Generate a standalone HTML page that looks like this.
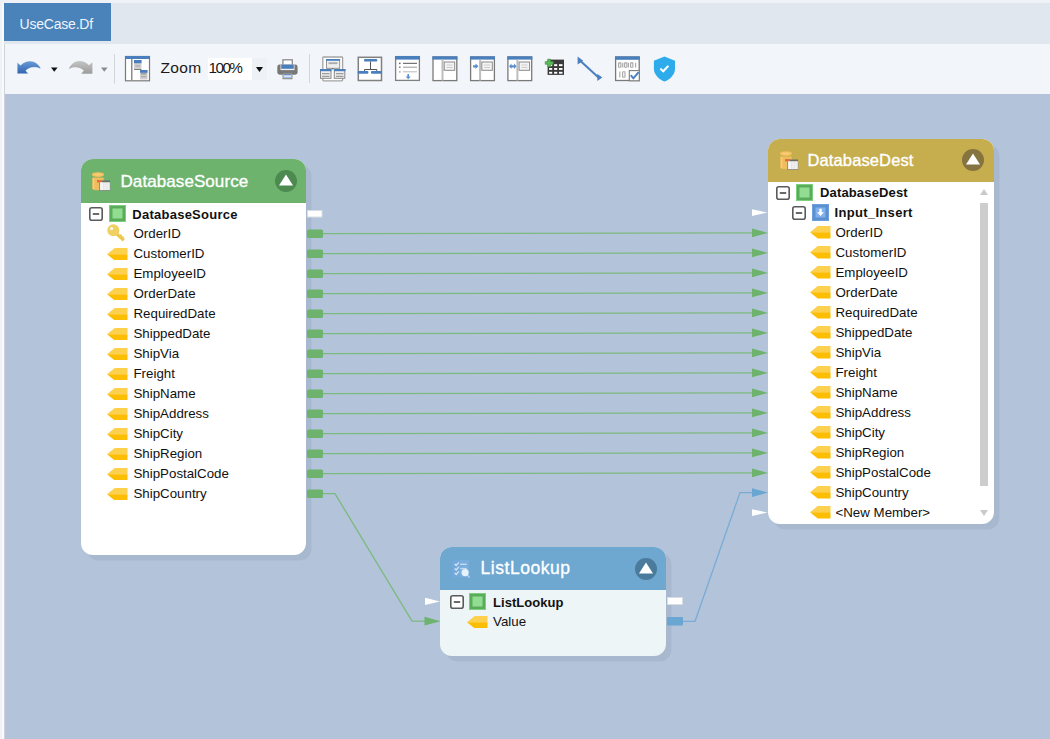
<!DOCTYPE html>
<html><head><meta charset="utf-8"><style>
*{margin:0;padding:0;box-sizing:border-box}
html,body{width:1050px;height:739px;overflow:hidden;background:#eff3f7;font-family:"Liberation Sans", sans-serif;position:relative}
.a{position:absolute}
.t{position:absolute;white-space:pre;line-height:1}
</style></head><body>
<div class="a" style="left:4px;top:3px;width:1046px;height:41px;background:#e0e7ef"></div>
<div class="a" style="left:4px;top:3px;width:107px;height:38px;background:#4a82ba"></div>
<div class="a" style="left:4px;top:44px;width:1046px;height:50px;background:#f2f5f9;border-left:1px solid #cfd4d9"></div>
<div class="a" style="left:5px;top:94px;width:1045px;height:645px;background:#b3c4da"></div>
<div class="a" style="left:4px;top:94px;width:1px;height:645px;background:#cdd2d8"></div>
<div class="a" style="left:2px;top:3px;width:1.5px;height:736px;background:#f8fafc"></div>

<div class="a" style="left:80.6px;top:159.3px;width:225.7px;height:395.5px;border-radius:12px;background:#ffffff;box-shadow:5.5px 5.5px 0 #a8b9cf;overflow:hidden"><div class="a" style="left:0;top:0;width:225.7px;height:43.7px;background:#6db36e"></div></div>
<div class="t" style="left:120.5px;top:173.1px;font-size:17px;letter-spacing:0.08px;color:#fff;-webkit-text-stroke:0.35px #fff">DatabaseSource</div>
<svg class="a" style="left:91px;top:171px" width="21" height="21" viewBox="0 0 21 21">
<path d="M1.2 6.4 H12.7 V17.2 Q12.7 19.2 6.95 19.2 Q1.2 19.2 1.2 17.2 Z" fill="#f0bd5e"/>
<rect x="2" y="7" width="1.3" height="11" fill="#f7cf7a"/>
<ellipse cx="6.95" cy="3.55" rx="5.5" ry="1.8" fill="#f6cd74" stroke="#f2bc58" stroke-width="1.2"/>
<rect x="6" y="9.1" width="5" height="2.3" fill="#e5693a"/>
<rect x="11" y="9.5" width="8" height="1.9" fill="#6a6a6a"/>
<rect x="8.8" y="11.4" width="10.2" height="8" fill="#e4e4e4"/>
<rect x="9.3" y="11.6" width="2.8" height="7.4" fill="#f4f4f4"/><rect x="12.8" y="11.6" width="2.6" height="7.4" fill="#ececec"/><rect x="16" y="11.6" width="2.6" height="7.4" fill="#eeeeee"/>
<rect x="8.3" y="11.4" width="0.7" height="8.3" fill="#777"/><rect x="8.3" y="19.2" width="11" height="0.6" fill="#777"/><rect x="18.8" y="11.4" width="0.6" height="8.3" fill="#999"/>
</svg>
<svg class="a" style="left:275.4px;top:170.2px" width="22" height="22" viewBox="0 0 22 22"><circle cx="11" cy="11" r="11" fill="#4d8a4f"/><path d="M11 4.5 L18 15.5 L4 15.5 Z" fill="#fff"/></svg>
<div class="a" style="left:768.3px;top:138.5px;width:226.2px;height:385px;border-radius:12px;background:#ffffff;box-shadow:5.5px 5.5px 0 #a8b9cf;overflow:hidden"><div class="a" style="left:0;top:0;width:226.2px;height:43px;background:#c6ae4e"></div></div>
<div class="t" style="left:807.5px;top:152.0px;font-size:16.5px;letter-spacing:0.12px;color:#fff;-webkit-text-stroke:0.35px #fff">DatabaseDest</div>
<svg class="a" style="left:778.5px;top:150px" width="21" height="21" viewBox="0 0 21 21">
<path d="M1.2 6.4 H12.7 V17.2 Q12.7 19.2 6.95 19.2 Q1.2 19.2 1.2 17.2 Z" fill="#f0bd5e"/>
<rect x="2" y="7" width="1.3" height="11" fill="#f7cf7a"/>
<ellipse cx="6.95" cy="3.55" rx="5.5" ry="1.8" fill="#f6cd74" stroke="#f2bc58" stroke-width="1.2"/>
<rect x="6" y="9.1" width="5" height="2.3" fill="#e5693a"/>
<rect x="11" y="9.5" width="8" height="1.9" fill="#6a6a6a"/>
<rect x="8.8" y="11.4" width="10.2" height="8" fill="#e4e4e4"/>
<rect x="9.3" y="11.6" width="2.8" height="7.4" fill="#f4f4f4"/><rect x="12.8" y="11.6" width="2.6" height="7.4" fill="#ececec"/><rect x="16" y="11.6" width="2.6" height="7.4" fill="#eeeeee"/>
<rect x="8.3" y="11.4" width="0.7" height="8.3" fill="#777"/><rect x="8.3" y="19.2" width="11" height="0.6" fill="#777"/><rect x="18.8" y="11.4" width="0.6" height="8.3" fill="#999"/>
</svg>
<svg class="a" style="left:962.4px;top:149.3px" width="22" height="22" viewBox="0 0 22 22"><circle cx="11" cy="11" r="11" fill="#857440"/><path d="M11 4.5 L18 15.5 L4 15.5 Z" fill="#fff"/></svg>
<div class="a" style="left:440.3px;top:547.2px;width:226.2px;height:108.6px;border-radius:12px;background:#eef5f7;box-shadow:5.5px 5.5px 0 #a8b9cf;overflow:hidden"><div class="a" style="left:0;top:0;width:226.2px;height:42.9px;background:#6ea7d0"></div></div>
<div class="t" style="left:480.5px;top:560.2px;font-size:17.5px;letter-spacing:0.55px;color:#fff;-webkit-text-stroke:0.35px #fff">ListLookup</div>
<svg class="a" style="left:452px;top:560px" width="18" height="19" viewBox="0 0 18 19">
<rect x="0" y="0" width="17" height="17.4" fill="#78aedd"/>
<rect x="0" y="0" width="7.5" height="17.4" fill="#73a9da"/>
<path d="M2.6 4 L4.2 5.4 L6.8 2.4 M2.6 8.5 L4.2 9.9 L6.8 6.9 M2.6 13 L4.2 14.4 L6.8 11.4" stroke="#dce9f6" stroke-width="1.4" fill="none" stroke-opacity="0.9"/>
<rect x="8.3" y="3.6" width="6.4" height="1.4" fill="#c4dbf0"/><rect x="8.3" y="7.9" width="6.4" height="1.3" fill="#c4dbf0"/>
<path d="M15.2 14.8 L17.6 17.6" stroke="#b9d5ee" stroke-width="1.3"/>
<circle cx="13.1" cy="12.6" r="3.6" fill="#e6f2fc"/>
</svg>
<svg class="a" style="left:635.3px;top:557.8px" width="22" height="22" viewBox="0 0 22 22"><circle cx="11" cy="11" r="11" fill="#4b7b9c"/><path d="M11 4.5 L18 15.5 L4 15.5 Z" fill="#fff"/></svg>
<svg class="a" style="left:89px;top:207px" width="14" height="14" viewBox="0 0 14 14"><rect x="0.8" y="0.8" width="12.4" height="12.4" rx="2" fill="#fff" stroke="#5a5a5a" stroke-width="1.6"/><rect x="3.8" y="6.1" width="6.4" height="1.8" fill="#5a5a5a"/></svg>
<svg class="a" style="left:109px;top:205px" width="17" height="17" viewBox="0 0 17 17"><rect x="0" y="0" width="17" height="17" fill="#7ccf7c"/><rect x="1" y="1" width="15" height="15" fill="#5aab5a"/><rect x="3.5" y="3.5" width="10" height="10" fill="#92dd92"/></svg>
<div class="t" style="left:132.3px;top:207.5px;font-size:13px;font-weight:bold;letter-spacing:0.25px;color:#111">DatabaseSource</div>
<svg class="a" style="left:107px;top:224px" width="18" height="18" viewBox="0 0 18 18"><path d="M9.5 9.8 L16.8 16.2" stroke="#ecc850" stroke-width="3.2"/><path d="M13 12 l1.6 -1.2 M15 13.8 l1.6 -1.2" stroke="#ecc850" stroke-width="1.8"/><circle cx="6.3" cy="6.3" r="6" fill="#f0d060"/><circle cx="4.6" cy="4.4" r="1.5" fill="#fff"/></svg>
<div class="t" style="left:133.5px;top:227.0px;font-size:13.3px;font-weight:normal;letter-spacing:0px;color:#111">OrderID</div>
<svg class="a" style="left:107px;top:247.5px" width="20.5" height="12.4" viewBox="0 0 20.5 12.4"><path d="M0 6.2 L7.7 0 H20.5 V6.2 Z" fill="#fdd04e"/><path d="M0 6.2 H20.5 V12.4 H7.7 Z" fill="#fdbd00"/></svg>
<div class="t" style="left:133.5px;top:247.0px;font-size:13.3px;font-weight:normal;letter-spacing:0px;color:#111">CustomerID</div>
<svg class="a" style="left:107px;top:267.5px" width="20.5" height="12.4" viewBox="0 0 20.5 12.4"><path d="M0 6.2 L7.7 0 H20.5 V6.2 Z" fill="#fdd04e"/><path d="M0 6.2 H20.5 V12.4 H7.7 Z" fill="#fdbd00"/></svg>
<div class="t" style="left:133.5px;top:267.0px;font-size:13.3px;font-weight:normal;letter-spacing:0px;color:#111">EmployeeID</div>
<svg class="a" style="left:107px;top:287.5px" width="20.5" height="12.4" viewBox="0 0 20.5 12.4"><path d="M0 6.2 L7.7 0 H20.5 V6.2 Z" fill="#fdd04e"/><path d="M0 6.2 H20.5 V12.4 H7.7 Z" fill="#fdbd00"/></svg>
<div class="t" style="left:133.5px;top:287.0px;font-size:13.3px;font-weight:normal;letter-spacing:0px;color:#111">OrderDate</div>
<svg class="a" style="left:107px;top:307.5px" width="20.5" height="12.4" viewBox="0 0 20.5 12.4"><path d="M0 6.2 L7.7 0 H20.5 V6.2 Z" fill="#fdd04e"/><path d="M0 6.2 H20.5 V12.4 H7.7 Z" fill="#fdbd00"/></svg>
<div class="t" style="left:133.5px;top:307.0px;font-size:13.3px;font-weight:normal;letter-spacing:0px;color:#111">RequiredDate</div>
<svg class="a" style="left:107px;top:327.5px" width="20.5" height="12.4" viewBox="0 0 20.5 12.4"><path d="M0 6.2 L7.7 0 H20.5 V6.2 Z" fill="#fdd04e"/><path d="M0 6.2 H20.5 V12.4 H7.7 Z" fill="#fdbd00"/></svg>
<div class="t" style="left:133.5px;top:327.0px;font-size:13.3px;font-weight:normal;letter-spacing:0px;color:#111">ShippedDate</div>
<svg class="a" style="left:107px;top:347.5px" width="20.5" height="12.4" viewBox="0 0 20.5 12.4"><path d="M0 6.2 L7.7 0 H20.5 V6.2 Z" fill="#fdd04e"/><path d="M0 6.2 H20.5 V12.4 H7.7 Z" fill="#fdbd00"/></svg>
<div class="t" style="left:133.5px;top:347.0px;font-size:13.3px;font-weight:normal;letter-spacing:0px;color:#111">ShipVia</div>
<svg class="a" style="left:107px;top:367.5px" width="20.5" height="12.4" viewBox="0 0 20.5 12.4"><path d="M0 6.2 L7.7 0 H20.5 V6.2 Z" fill="#fdd04e"/><path d="M0 6.2 H20.5 V12.4 H7.7 Z" fill="#fdbd00"/></svg>
<div class="t" style="left:133.5px;top:367.0px;font-size:13.3px;font-weight:normal;letter-spacing:0px;color:#111">Freight</div>
<svg class="a" style="left:107px;top:387.5px" width="20.5" height="12.4" viewBox="0 0 20.5 12.4"><path d="M0 6.2 L7.7 0 H20.5 V6.2 Z" fill="#fdd04e"/><path d="M0 6.2 H20.5 V12.4 H7.7 Z" fill="#fdbd00"/></svg>
<div class="t" style="left:133.5px;top:387.0px;font-size:13.3px;font-weight:normal;letter-spacing:0px;color:#111">ShipName</div>
<svg class="a" style="left:107px;top:407.5px" width="20.5" height="12.4" viewBox="0 0 20.5 12.4"><path d="M0 6.2 L7.7 0 H20.5 V6.2 Z" fill="#fdd04e"/><path d="M0 6.2 H20.5 V12.4 H7.7 Z" fill="#fdbd00"/></svg>
<div class="t" style="left:133.5px;top:407.0px;font-size:13.3px;font-weight:normal;letter-spacing:0px;color:#111">ShipAddress</div>
<svg class="a" style="left:107px;top:427.5px" width="20.5" height="12.4" viewBox="0 0 20.5 12.4"><path d="M0 6.2 L7.7 0 H20.5 V6.2 Z" fill="#fdd04e"/><path d="M0 6.2 H20.5 V12.4 H7.7 Z" fill="#fdbd00"/></svg>
<div class="t" style="left:133.5px;top:427.0px;font-size:13.3px;font-weight:normal;letter-spacing:0px;color:#111">ShipCity</div>
<svg class="a" style="left:107px;top:447.5px" width="20.5" height="12.4" viewBox="0 0 20.5 12.4"><path d="M0 6.2 L7.7 0 H20.5 V6.2 Z" fill="#fdd04e"/><path d="M0 6.2 H20.5 V12.4 H7.7 Z" fill="#fdbd00"/></svg>
<div class="t" style="left:133.5px;top:447.0px;font-size:13.3px;font-weight:normal;letter-spacing:0px;color:#111">ShipRegion</div>
<svg class="a" style="left:107px;top:467.5px" width="20.5" height="12.4" viewBox="0 0 20.5 12.4"><path d="M0 6.2 L7.7 0 H20.5 V6.2 Z" fill="#fdd04e"/><path d="M0 6.2 H20.5 V12.4 H7.7 Z" fill="#fdbd00"/></svg>
<div class="t" style="left:133.5px;top:467.0px;font-size:13.3px;font-weight:normal;letter-spacing:0px;color:#111">ShipPostalCode</div>
<svg class="a" style="left:107px;top:487.5px" width="20.5" height="12.4" viewBox="0 0 20.5 12.4"><path d="M0 6.2 L7.7 0 H20.5 V6.2 Z" fill="#fdd04e"/><path d="M0 6.2 H20.5 V12.4 H7.7 Z" fill="#fdbd00"/></svg>
<div class="t" style="left:133.5px;top:487.0px;font-size:13.3px;font-weight:normal;letter-spacing:0px;color:#111">ShipCountry</div>
<svg class="a" style="left:776px;top:186px" width="14" height="14" viewBox="0 0 14 14"><rect x="0.8" y="0.8" width="12.4" height="12.4" rx="2" fill="#fff" stroke="#5a5a5a" stroke-width="1.6"/><rect x="3.8" y="6.1" width="6.4" height="1.8" fill="#5a5a5a"/></svg>
<svg class="a" style="left:796px;top:184px" width="17" height="17" viewBox="0 0 17 17"><rect x="0" y="0" width="17" height="17" fill="#7ccf7c"/><rect x="1" y="1" width="15" height="15" fill="#5aab5a"/><rect x="3.5" y="3.5" width="10" height="10" fill="#92dd92"/></svg>
<div class="t" style="left:820px;top:186.4px;font-size:13px;font-weight:bold;letter-spacing:0.15px;color:#111">DatabaseDest</div>
<svg class="a" style="left:791.5px;top:206px" width="14" height="14" viewBox="0 0 14 14"><rect x="0.8" y="0.8" width="12.4" height="12.4" rx="2" fill="#fff" stroke="#5a5a5a" stroke-width="1.6"/><rect x="3.8" y="6.1" width="6.4" height="1.8" fill="#5a5a5a"/></svg>
<svg class="a" style="left:811.5px;top:204px" width="17" height="17" viewBox="0 0 17 17"><rect x="0" y="0" width="17" height="17" fill="#6b9fde"/><rect x="1" y="1" width="15" height="15" fill="#5b91d0"/><rect x="3.5" y="3.5" width="10" height="10" fill="#80b1ec"/><path d="M7.3 4.8h2.4v3.4h2.3L8.5 12 5 8.2h2.3z" fill="#fff"/></svg>
<div class="t" style="left:834.5px;top:206.4px;font-size:13px;font-weight:bold;letter-spacing:0.32px;color:#111">Input_Insert</div>
<svg class="a" style="left:810px;top:226.4px" width="20.5" height="12.4" viewBox="0 0 20.5 12.4"><path d="M0 6.2 L7.7 0 H20.5 V6.2 Z" fill="#fdd04e"/><path d="M0 6.2 H20.5 V12.4 H7.7 Z" fill="#fdbd00"/></svg>
<div class="t" style="left:835.5px;top:225.9px;font-size:13.3px;font-weight:normal;letter-spacing:0px;color:#111">OrderID</div>
<svg class="a" style="left:810px;top:246.4px" width="20.5" height="12.4" viewBox="0 0 20.5 12.4"><path d="M0 6.2 L7.7 0 H20.5 V6.2 Z" fill="#fdd04e"/><path d="M0 6.2 H20.5 V12.4 H7.7 Z" fill="#fdbd00"/></svg>
<div class="t" style="left:835.5px;top:245.9px;font-size:13.3px;font-weight:normal;letter-spacing:0px;color:#111">CustomerID</div>
<svg class="a" style="left:810px;top:266.4px" width="20.5" height="12.4" viewBox="0 0 20.5 12.4"><path d="M0 6.2 L7.7 0 H20.5 V6.2 Z" fill="#fdd04e"/><path d="M0 6.2 H20.5 V12.4 H7.7 Z" fill="#fdbd00"/></svg>
<div class="t" style="left:835.5px;top:265.9px;font-size:13.3px;font-weight:normal;letter-spacing:0px;color:#111">EmployeeID</div>
<svg class="a" style="left:810px;top:286.4px" width="20.5" height="12.4" viewBox="0 0 20.5 12.4"><path d="M0 6.2 L7.7 0 H20.5 V6.2 Z" fill="#fdd04e"/><path d="M0 6.2 H20.5 V12.4 H7.7 Z" fill="#fdbd00"/></svg>
<div class="t" style="left:835.5px;top:285.9px;font-size:13.3px;font-weight:normal;letter-spacing:0px;color:#111">OrderDate</div>
<svg class="a" style="left:810px;top:306.4px" width="20.5" height="12.4" viewBox="0 0 20.5 12.4"><path d="M0 6.2 L7.7 0 H20.5 V6.2 Z" fill="#fdd04e"/><path d="M0 6.2 H20.5 V12.4 H7.7 Z" fill="#fdbd00"/></svg>
<div class="t" style="left:835.5px;top:305.9px;font-size:13.3px;font-weight:normal;letter-spacing:0px;color:#111">RequiredDate</div>
<svg class="a" style="left:810px;top:326.4px" width="20.5" height="12.4" viewBox="0 0 20.5 12.4"><path d="M0 6.2 L7.7 0 H20.5 V6.2 Z" fill="#fdd04e"/><path d="M0 6.2 H20.5 V12.4 H7.7 Z" fill="#fdbd00"/></svg>
<div class="t" style="left:835.5px;top:325.9px;font-size:13.3px;font-weight:normal;letter-spacing:0px;color:#111">ShippedDate</div>
<svg class="a" style="left:810px;top:346.4px" width="20.5" height="12.4" viewBox="0 0 20.5 12.4"><path d="M0 6.2 L7.7 0 H20.5 V6.2 Z" fill="#fdd04e"/><path d="M0 6.2 H20.5 V12.4 H7.7 Z" fill="#fdbd00"/></svg>
<div class="t" style="left:835.5px;top:345.9px;font-size:13.3px;font-weight:normal;letter-spacing:0px;color:#111">ShipVia</div>
<svg class="a" style="left:810px;top:366.4px" width="20.5" height="12.4" viewBox="0 0 20.5 12.4"><path d="M0 6.2 L7.7 0 H20.5 V6.2 Z" fill="#fdd04e"/><path d="M0 6.2 H20.5 V12.4 H7.7 Z" fill="#fdbd00"/></svg>
<div class="t" style="left:835.5px;top:365.9px;font-size:13.3px;font-weight:normal;letter-spacing:0px;color:#111">Freight</div>
<svg class="a" style="left:810px;top:386.4px" width="20.5" height="12.4" viewBox="0 0 20.5 12.4"><path d="M0 6.2 L7.7 0 H20.5 V6.2 Z" fill="#fdd04e"/><path d="M0 6.2 H20.5 V12.4 H7.7 Z" fill="#fdbd00"/></svg>
<div class="t" style="left:835.5px;top:385.9px;font-size:13.3px;font-weight:normal;letter-spacing:0px;color:#111">ShipName</div>
<svg class="a" style="left:810px;top:406.4px" width="20.5" height="12.4" viewBox="0 0 20.5 12.4"><path d="M0 6.2 L7.7 0 H20.5 V6.2 Z" fill="#fdd04e"/><path d="M0 6.2 H20.5 V12.4 H7.7 Z" fill="#fdbd00"/></svg>
<div class="t" style="left:835.5px;top:405.9px;font-size:13.3px;font-weight:normal;letter-spacing:0px;color:#111">ShipAddress</div>
<svg class="a" style="left:810px;top:426.4px" width="20.5" height="12.4" viewBox="0 0 20.5 12.4"><path d="M0 6.2 L7.7 0 H20.5 V6.2 Z" fill="#fdd04e"/><path d="M0 6.2 H20.5 V12.4 H7.7 Z" fill="#fdbd00"/></svg>
<div class="t" style="left:835.5px;top:425.9px;font-size:13.3px;font-weight:normal;letter-spacing:0px;color:#111">ShipCity</div>
<svg class="a" style="left:810px;top:446.4px" width="20.5" height="12.4" viewBox="0 0 20.5 12.4"><path d="M0 6.2 L7.7 0 H20.5 V6.2 Z" fill="#fdd04e"/><path d="M0 6.2 H20.5 V12.4 H7.7 Z" fill="#fdbd00"/></svg>
<div class="t" style="left:835.5px;top:445.9px;font-size:13.3px;font-weight:normal;letter-spacing:0px;color:#111">ShipRegion</div>
<svg class="a" style="left:810px;top:466.4px" width="20.5" height="12.4" viewBox="0 0 20.5 12.4"><path d="M0 6.2 L7.7 0 H20.5 V6.2 Z" fill="#fdd04e"/><path d="M0 6.2 H20.5 V12.4 H7.7 Z" fill="#fdbd00"/></svg>
<div class="t" style="left:835.5px;top:465.9px;font-size:13.3px;font-weight:normal;letter-spacing:0px;color:#111">ShipPostalCode</div>
<svg class="a" style="left:810px;top:486.4px" width="20.5" height="12.4" viewBox="0 0 20.5 12.4"><path d="M0 6.2 L7.7 0 H20.5 V6.2 Z" fill="#fdd04e"/><path d="M0 6.2 H20.5 V12.4 H7.7 Z" fill="#fdbd00"/></svg>
<div class="t" style="left:835.5px;top:485.9px;font-size:13.3px;font-weight:normal;letter-spacing:0px;color:#111">ShipCountry</div>
<svg class="a" style="left:810px;top:506.4px" width="20.5" height="12.4" viewBox="0 0 20.5 12.4"><path d="M0 6.2 L7.7 0 H20.5 V6.2 Z" fill="#fdd04e"/><path d="M0 6.2 H20.5 V12.4 H7.7 Z" fill="#fdbd00"/></svg>
<div class="t" style="left:835.5px;top:505.9px;font-size:13.3px;font-weight:normal;letter-spacing:0px;color:#111">&lt;New Member&gt;</div>
<svg class="a" style="left:979px;top:188px" width="10" height="8"><path d="M1 7 L5 1 L9 7 Z" fill="#cacaca"/></svg>
<div class="a" style="left:980px;top:203px;width:7.5px;height:283px;background:#cdcdcd"></div>
<svg class="a" style="left:979px;top:509px" width="10" height="8"><path d="M1 1 L5 7 L9 1 Z" fill="#cacaca"/></svg>
<svg class="a" style="left:449.5px;top:595px" width="14" height="14" viewBox="0 0 14 14"><rect x="0.8" y="0.8" width="12.4" height="12.4" rx="2" fill="#fff" stroke="#5a5a5a" stroke-width="1.6"/><rect x="3.8" y="6.1" width="6.4" height="1.8" fill="#5a5a5a"/></svg>
<svg class="a" style="left:469px;top:593px" width="17" height="17" viewBox="0 0 17 17"><rect x="0" y="0" width="17" height="17" fill="#7ccf7c"/><rect x="1" y="1" width="15" height="15" fill="#5aab5a"/><rect x="3.5" y="3.5" width="10" height="10" fill="#92dd92"/></svg>
<div class="t" style="left:493px;top:595.5px;font-size:13px;font-weight:bold;letter-spacing:0.05px;color:#111">ListLookup</div>
<svg class="a" style="left:467px;top:615.5px" width="20.5" height="12.4" viewBox="0 0 20.5 12.4"><path d="M0 6.2 L7.7 0 H20.5 V6.2 Z" fill="#fdd04e"/><path d="M0 6.2 H20.5 V12.4 H7.7 Z" fill="#fdbd00"/></svg>
<div class="t" style="left:493px;top:615.0px;font-size:13.3px;font-weight:normal;letter-spacing:0px;color:#111">Value</div>
<svg class="a" style="left:0;top:0" width="1050" height="739" viewBox="0 0 1050 739">
<rect x="307.5" y="210.5" width="14.5" height="6.5" fill="#fff" stroke="#d8dde3" stroke-width="1"/>
<rect x="307" y="229.4" width="16" height="8.6" rx="1.5" fill="#6db36e"/>
<rect x="307" y="249.4" width="16" height="8.6" rx="1.5" fill="#6db36e"/>
<rect x="307" y="269.4" width="16" height="8.6" rx="1.5" fill="#6db36e"/>
<rect x="307" y="289.4" width="16" height="8.6" rx="1.5" fill="#6db36e"/>
<rect x="307" y="309.4" width="16" height="8.6" rx="1.5" fill="#6db36e"/>
<rect x="307" y="329.4" width="16" height="8.6" rx="1.5" fill="#6db36e"/>
<rect x="307" y="349.4" width="16" height="8.6" rx="1.5" fill="#6db36e"/>
<rect x="307" y="369.4" width="16" height="8.6" rx="1.5" fill="#6db36e"/>
<rect x="307" y="389.4" width="16" height="8.6" rx="1.5" fill="#6db36e"/>
<rect x="307" y="409.4" width="16" height="8.6" rx="1.5" fill="#6db36e"/>
<rect x="307" y="429.4" width="16" height="8.6" rx="1.5" fill="#6db36e"/>
<rect x="307" y="449.4" width="16" height="8.6" rx="1.5" fill="#6db36e"/>
<rect x="307" y="469.4" width="16" height="8.6" rx="1.5" fill="#6db36e"/>
<rect x="307" y="489.4" width="16" height="8.6" rx="1.5" fill="#6db36e"/>
<line x1="323" y1="233.6" x2="753" y2="232.9" stroke="#7cb97f" stroke-width="1.3"/>
<path d="M752 228.6 L768 232.9 L752 237.2 Z" fill="#6db36e"/>
<line x1="323" y1="253.6" x2="753" y2="252.9" stroke="#7cb97f" stroke-width="1.3"/>
<path d="M752 248.6 L768 252.9 L752 257.2 Z" fill="#6db36e"/>
<line x1="323" y1="273.6" x2="753" y2="272.9" stroke="#7cb97f" stroke-width="1.3"/>
<path d="M752 268.6 L768 272.9 L752 277.2 Z" fill="#6db36e"/>
<line x1="323" y1="293.6" x2="753" y2="292.9" stroke="#7cb97f" stroke-width="1.3"/>
<path d="M752 288.6 L768 292.9 L752 297.2 Z" fill="#6db36e"/>
<line x1="323" y1="313.6" x2="753" y2="312.9" stroke="#7cb97f" stroke-width="1.3"/>
<path d="M752 308.6 L768 312.9 L752 317.2 Z" fill="#6db36e"/>
<line x1="323" y1="333.6" x2="753" y2="332.9" stroke="#7cb97f" stroke-width="1.3"/>
<path d="M752 328.6 L768 332.9 L752 337.2 Z" fill="#6db36e"/>
<line x1="323" y1="353.6" x2="753" y2="352.9" stroke="#7cb97f" stroke-width="1.3"/>
<path d="M752 348.6 L768 352.9 L752 357.2 Z" fill="#6db36e"/>
<line x1="323" y1="373.6" x2="753" y2="372.9" stroke="#7cb97f" stroke-width="1.3"/>
<path d="M752 368.6 L768 372.9 L752 377.2 Z" fill="#6db36e"/>
<line x1="323" y1="393.6" x2="753" y2="392.9" stroke="#7cb97f" stroke-width="1.3"/>
<path d="M752 388.6 L768 392.9 L752 397.2 Z" fill="#6db36e"/>
<line x1="323" y1="413.6" x2="753" y2="412.9" stroke="#7cb97f" stroke-width="1.3"/>
<path d="M752 408.6 L768 412.9 L752 417.2 Z" fill="#6db36e"/>
<line x1="323" y1="433.6" x2="753" y2="432.9" stroke="#7cb97f" stroke-width="1.3"/>
<path d="M752 428.6 L768 432.9 L752 437.2 Z" fill="#6db36e"/>
<line x1="323" y1="453.6" x2="753" y2="452.9" stroke="#7cb97f" stroke-width="1.3"/>
<path d="M752 448.6 L768 452.9 L752 457.2 Z" fill="#6db36e"/>
<line x1="323" y1="473.6" x2="753" y2="472.9" stroke="#7cb97f" stroke-width="1.3"/>
<path d="M752 468.6 L768 472.9 L752 477.2 Z" fill="#6db36e"/>
<path d="M752 209.2 L767.5 212.6 L752 216.0 Z" fill="#fff"/>
<path d="M752 509.2 L767.5 512.6 L752 516.0 Z" fill="#fff"/>
<polyline points="323,493.7 335,493.7 412,621.2 426,621.2" fill="none" stroke="#7cb97f" stroke-width="1.3"/>
<path d="M424.5 616.8 L440.5 621.2 L424.5 625.6 Z" fill="#6db36e"/>
<path d="M425 597.8 L440 601.4 L425 605 Z" fill="#fff"/>
<rect x="667.5" y="597.5" width="15" height="7" fill="#fff" stroke="#d8dde3" stroke-width="1"/>
<rect x="667" y="617" width="16" height="8.4" rx="1" fill="#6aa6d2"/>
<polyline points="683,621.3 695,621.3 740,492.6 753,492.6" fill="none" stroke="#78acd6" stroke-width="1.3"/>
<path d="M752 488.3 L768 492.6 L752 496.9 Z" fill="#6aa6d2"/>
</svg>
<div class="t" style="left:19.5px;top:16.7px;font-size:14px;letter-spacing:-0.2px;color:#eef4fa">UseCase.Df</div>
<div class="a" style="left:207.5px;top:58px;width:59px;height:21.5px;background:#fff"></div>
<div class="a" style="left:252px;top:58px;width:14.5px;height:21.5px;background:#eef2f6"></div>
<div class="t" style="left:160.5px;top:60px;font-size:15.5px;letter-spacing:0.35px;color:#1a1a1a">Zoom</div>
<div class="t" style="left:208.5px;top:59.6px;font-size:15.3px;letter-spacing:-1.55px;color:#1a1a1a">100%</div>
<svg class="a" style="left:0;top:43px" width="1050" height="51" viewBox="0 43 1050 51">
<defs>
<linearGradient id="ug" x1="0" y1="0" x2="0" y2="1"><stop offset="0" stop-color="#6a9ad6"/><stop offset="1" stop-color="#2f64b0"/></linearGradient>
<linearGradient id="rg" x1="0" y1="0" x2="0" y2="1"><stop offset="0" stop-color="#c4c4c4"/><stop offset="1" stop-color="#9c9c9c"/></linearGradient>
</defs>
<!-- undo -->
<path d="M17.2 62.3 L17.2 73.8 L28.3 73.8 L25.8 70.6 C30.5 66.5 36 66.5 41 69 C38 61.5 28.5 57.5 20.6 65.2 Z" fill="url(#ug)" stroke="#fff" stroke-width="0.6" stroke-opacity="0.7"/>
<path d="M51 67.6 H57.6 L54.3 71.7 Z" fill="#111"/>
<!-- redo -->
<path d="M92.4 62.3 L92.4 73.8 L81.3 73.8 L83.8 70.6 C79.1 66.5 73.6 66.5 68.8 69 C71.6 61.5 81.1 57.5 89 65.2 Z" fill="url(#rg)"/>
<path d="M101 67.6 H107.6 L104.3 71.7 Z" fill="#8c8c8c"/>
<rect x="114" y="54" width="1" height="29.5" fill="#d2d6db"/>
<!-- layout icon -->
<rect x="125.5" y="56.5" width="24" height="24.3" fill="#fff" stroke="#7a7a7a" stroke-width="1.2"/>
<rect x="125" y="56" width="25" height="3" fill="#4a7fbe"/>
<rect x="131" y="59" width="1.5" height="21.5" fill="#8c8c8c"/>
<rect x="134" y="60" width="7.5" height="9.5" fill="#cfcfcf"/><rect x="134" y="60" width="7.5" height="3.2" fill="#4a7fbe"/><rect x="134" y="69" width="7.5" height="0.8" fill="#666"/><rect x="135.5" y="65.3" width="4.5" height="1.3" fill="#b0b0b0"/>
<rect x="140" y="70" width="7.5" height="9.5" fill="#cfcfcf"/><rect x="140" y="70" width="7.5" height="2.8" fill="#4a7fbe"/><rect x="141" y="73.5" width="5.5" height="0.8" fill="#777"/><rect x="141" y="76" width="5.5" height="1.2" fill="#aaa"/>
<!-- zoom dropdown triangle -->
<path d="M256 67 H263 L259.5 72 Z" fill="#111"/>
<!-- printer -->
<rect x="282.9" y="59.8" width="9.4" height="6.5" fill="#fff" stroke="#8c8c8c" stroke-width="1.3"/>
<path d="M277.3 67 Q277.3 64.6 279.7 64.6 H295.2 Q297.6 64.6 297.6 67 V72.3 Q297.6 74.7 295.2 74.7 H279.7 Q277.3 74.7 277.3 72.3 Z" fill="#787878"/>
<rect x="280.5" y="64.6" width="14" height="5.5" fill="#f2f2f2"/>
<rect x="281.2" y="64.6" width="12.6" height="4.2" fill="#4a7fbe"/>
<rect x="283.1" y="73.4" width="8.8" height="5.3" fill="#eef2f6" stroke="#8a8a8a" stroke-width="1.1"/>
<rect x="284" y="74.1" width="7" height="1.2" fill="#5585c2"/>
<rect x="284" y="76.8" width="7" height="1.2" fill="#9dbbe0"/>
<rect x="309" y="54" width="1" height="29" fill="#d2d6db"/>
<!-- icon B hierarchy -->
<rect x="322.8" y="57" width="19.8" height="23.8" rx="0.8" fill="#fff" stroke="#a4a4a4" stroke-width="1.3"/>
<rect x="326.5" y="59.5" width="13.2" height="8.8" fill="#eee" stroke="#888" stroke-width="0.9"/>
<rect x="326" y="59" width="14" height="1.8" fill="#4a7fbe"/>
<rect x="328.5" y="62.3" width="9" height="1.8" fill="#aaa"/>
<path d="M332.8 68 V69.5" stroke="#666" stroke-width="1.2"/>
<rect x="320.5" y="69.5" width="10.5" height="8.8" fill="#eee" stroke="#888" stroke-width="1"/>
<rect x="320" y="69" width="11.5" height="2.2" fill="#4a7fbe"/>
<rect x="322" y="73.2" width="7.5" height="1" fill="#888"/><rect x="322" y="75.8" width="7.5" height="1" fill="#888"/>
<rect x="334.3" y="69.5" width="10.5" height="8.8" fill="#eee" stroke="#888" stroke-width="1"/>
<rect x="334" y="69" width="11.5" height="2.2" fill="#4a7fbe"/>
<rect x="336" y="73.2" width="7.5" height="1" fill="#888"/><rect x="336" y="75.8" width="7.5" height="1" fill="#888"/>
<!-- icon C tree -->
<rect x="358.3" y="57.3" width="23.2" height="23.2" fill="#fff" stroke="#808080" stroke-width="1.5"/>
<rect x="364" y="59" width="13.3" height="2.6" rx="1.2" fill="#4a7fbe"/>
<path d="M370.5 61.5 V69.5 M364.5 71.3 V69.5 H376.8 V71.3" stroke="#555" stroke-width="1" fill="none"/>
<rect x="357.6" y="71" width="10.8" height="2.8" rx="1" fill="#4a7fbe"/>
<rect x="371" y="71" width="11" height="2.8" rx="1" fill="#4a7fbe"/>
<!-- icon D list -->
<rect x="395.6" y="56.6" width="23.8" height="23.8" fill="#fff" stroke="#808080" stroke-width="1.3"/>
<rect x="395" y="56" width="25" height="3.6" fill="#4a7fbe"/>
<circle cx="399.8" cy="63.3" r="0.9" fill="#666"/><rect x="403" y="62.8" width="14" height="1" fill="#555"/>
<circle cx="399.8" cy="67.2" r="0.9" fill="#888"/><rect x="403" y="66.7" width="14" height="1" fill="#999"/>
<circle cx="399.8" cy="71.8" r="0.9" fill="#aaa"/><rect x="403" y="71.3" width="14" height="1" fill="#bbb"/>
<path d="M407.4 74 H409 V76.5 H410.8 L408.2 79.3 L405.6 76.5 H407.4 Z" fill="#5a8fd0"/>
<!-- icon E,F,G panels -->
<g id="pE">
<rect x="433" y="57" width="23.8" height="23.6" fill="#fff" stroke="#7a7a7a" stroke-width="1.3"/>
<rect x="432.4" y="56.3" width="25" height="3.3" fill="#4a7fbe"/>
<rect x="441.5" y="59.5" width="2" height="21" fill="#bdbdbd"/>
<rect x="444.2" y="62" width="10.5" height="8.3" fill="#f4f4f4" stroke="#8a8a8a" stroke-width="1"/>
<rect x="446.5" y="64.6" width="6" height="0.9" fill="#c8c8c8"/><rect x="446.5" y="67" width="6" height="0.9" fill="#c8c8c8"/>
</g>
<use href="#pE" x="37.6"/>
<use href="#pE" x="74.9"/>
<path d="M473 65.2 H475.5 V63.5 L478.5 66.3 L475.5 69.1 V67.4 H473 Z" fill="#5b8fd0"/>
<path d="M509 66.3 L511.5 63.5 V65.2 H514 V63.5 L516.6 66.3 L514 69.1 V67.4 H511.5 V69.1 Z" fill="#5b8fd0"/>
<!-- table icon -->
<rect x="547.6" y="59.6" width="16.4" height="15.3" fill="#3a3a3a"/>
<g fill="#fff">
<rect x="549.1" y="64.2" width="3.1" height="1.9"/><rect x="554.1" y="64.2" width="3.1" height="1.9"/><rect x="559" y="64.2" width="3.5" height="1.9"/>
<rect x="549.1" y="68" width="3.1" height="1.9"/><rect x="554.1" y="68" width="3.1" height="1.9"/><rect x="559" y="68" width="3.5" height="1.9"/>
<rect x="549.1" y="71.8" width="3.1" height="1.9"/><rect x="554.1" y="71.8" width="3.1" height="1.9"/><rect x="559" y="71.8" width="3.5" height="1.9"/>
</g>
<path d="M547.8 59.2 H550.6 V61.6 H553.2 V64.3 H550.6 V66.7 H547.8 V64.3 H545.2 V61.6 H547.8 Z" fill="#5cb85c" stroke="#3f8f3f" stroke-width="0.6"/>
<!-- line icon -->
<path d="M580.5 61 L598.5 77.5" stroke="#4a80c0" stroke-width="2.1"/>
<path d="M577.6 56.6 L583.2 60.8 L580.8 62.5 L577.6 64.4 Z" fill="#4a80c0"/>
<path d="M597.3 73.7 L602.3 77.5 L597.3 81 Z" fill="#4a80c0"/>
<!-- calc icon -->
<rect x="615.6" y="57" width="23.6" height="23.5" fill="#fff" stroke="#7a7a7a" stroke-width="1.3"/>
<rect x="615" y="56.4" width="24.8" height="3.4" fill="#4a7fbe"/>
<g fill="none" stroke="#a4a4a4" stroke-width="1.1">
<rect x="618.6" y="62.9" width="2.3" height="4.4" rx="0.6"/><rect x="624.6" y="62.9" width="2.3" height="4.4" rx="0.6"/><rect x="630.6" y="62.9" width="2.3" height="4.4" rx="0.6"/>
<path d="M622.8 62.8 V67.4 M628.4 62.8 V67.4 M635.6 62.8 V67.4"/>
<path d="M619.8 71.6 V77.4"/><rect x="622.6" y="71.7" width="2.4" height="5.6" rx="0.6"/>
</g>
<rect x="629.3" y="70.6" width="10" height="10.2" fill="#fff" stroke="#7c7c7c" stroke-width="1.1"/>
<path d="M631.3 75.8 L633.4 78.3 L638 72.8" stroke="#4a7fc0" stroke-width="2" fill="none" stroke-linecap="round"/>
<!-- shield -->
<path d="M664.5 56.4 L675 60.7 V69 C675 74.5 670 79.5 664.5 81.6 C659 79.5 653.9 74.5 653.9 69 V60.7 Z" fill="#2eabeb"/>
<path d="M661 69.2 L663.3 71.2 L667.8 66.4" stroke="#fff" stroke-width="2.1" fill="none" stroke-linecap="round"/>
</svg>

</body></html>
